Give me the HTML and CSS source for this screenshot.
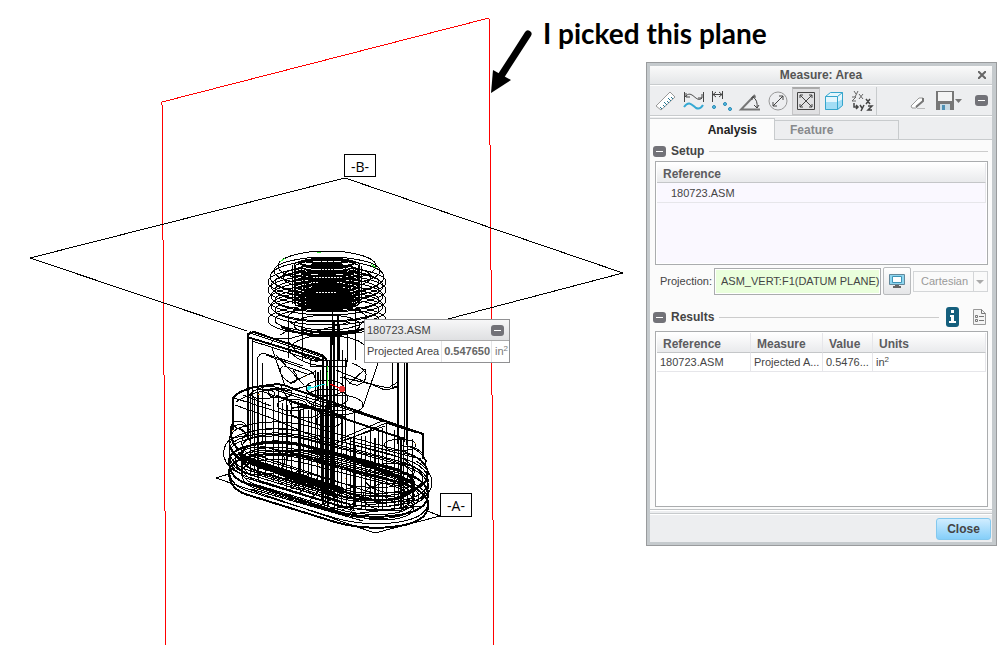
FILE: index.html
```html
<!DOCTYPE html>
<html lang="en">
<head>
<meta charset="utf-8">
<title>Measure: Area</title>
<link rel="stylesheet" href="styles.css">
</head>
<body>
<main class="viewport">
  <svg class="scene" width="1003" height="645" viewBox="0 0 1003 645" role="img" aria-label="Wireframe of assembly 180723 with datum planes">
    <defs>
      <g id="coil"><ellipse cx="327" cy="0" rx="59" ry="15"/><ellipse cx="327" cy="0" rx="52" ry="12"/></g>
      <ellipse id="core" cx="327" cy="0" rx="33" ry="8"/>
      <path id="ring" d="M229 466C229 452 262 444 300 450L395 475C425 482 431 495 427 505C420 523 370 526 335 516L245 488C232 483 229 475 229 466Z"/>
      <path id="inner" d="M242 467C243 456 270 451 300 457L390 480C412 486 418 496 412 504C402 516 366 516 337 508L254 483C244 479 241 473 242 467Z"/>
    </defs>
    <g class="wire">
      <path class="red" d="M166 645L162 102L489 18L494 645"/>
      <path d="M247 331L30 258L345 178L623 273L448 319"/>
      <path d="M232 473L216 478L375 533L440 516L425 510"/>

      <!-- plunger and spring -->
      <ellipse cx="327" cy="266" rx="49" ry="15"/>
      <ellipse cx="327" cy="271" rx="53" ry="14"/>
      <ellipse cx="327" cy="277" rx="57" ry="17"/>
      <ellipse cx="327" cy="277" rx="44" ry="12"/>
      <use href="#coil" y="282"/><use href="#coil" y="290"/><use href="#coil" y="300"/><use href="#coil" y="310"/><use href="#coil" y="320"/>
      <ellipse cx="327" cy="286" rx="56" ry="15"/><ellipse cx="327" cy="296" rx="56" ry="15"/><ellipse cx="327" cy="306" rx="56" ry="15"/>
      <use href="#core" y="266"/><use href="#core" y="268"/><use href="#core" y="272"/><use href="#core" y="276"/><use href="#core" y="280"/><use href="#core" y="284"/><use href="#core" y="288"/><use href="#core" y="292"/><use href="#core" y="296"/><use href="#core" y="299"/><use href="#core" y="302"/>
      <g class="bold">
        <ellipse cx="327" cy="261" rx="22" ry="2"/><ellipse cx="327" cy="263" rx="27" ry="4"/><ellipse cx="327" cy="276" rx="23" ry="4"/><ellipse cx="327" cy="281" rx="23" ry="6"/><ellipse cx="327" cy="289" rx="23" ry="6"/><ellipse cx="327" cy="293" rx="20" ry="4"/><ellipse cx="327" cy="297" rx="26" ry="6"/><ellipse cx="327" cy="301" rx="25" ry="4"/><ellipse cx="327" cy="303" rx="29" ry="5"/>
        <path d="M281 327Q326 346 374 325M301 329Q328 337 362 330"/>
      </g>
      <path d="M292 265V304M295 266V306M301 268V308M304 268V308M308 275V308M312 275V308M315 275V308M318 275V308M321 260V308M324 265V308M327 260V308M330 265V308M333 260V308M336 275V308M339 275V308M342 275V308M345 268V308M349 268V308M353 267V306M358 266V304M361 266V300"/>
      <ellipse cx="327" cy="318" rx="39" ry="12"/><ellipse cx="327" cy="325" rx="33" ry="10"/>
      <path d="M288 315V358M302 310V360M347 335V362M355 310V360M366 315V360M332 305V345M338 315V345"/>
      <path d="M280 335L289 330M271 343Q275 336 288 339L350 322M272 348L285 386M276 355L304 385M288 349Q300 334 328 336Q360 336 366 348"/>
      <path d="M288 349Q298 364 324 366M289 342Q300 361 328 360M310 360H346V366H310Z"/>

      <!-- yoke -->
      <path class="bold" d="M248 440V334L254 332L319 354Q326 356 327 362V490M323 357V440M331 335V494M334 322V486M339 325V360M247 337L320 359"/>
      <path d="M252 438V338M257 440V359Q260 352 266 354L303 366M262 441V363M266 355L305 369Q314 371 315 378V450M250 333L322 357M252 341L318 362M247 337L251 331M315 370V455M320 370V460M337 315V470M342 350V445M345 358V443"/>
      <path class="bold" d="M398 361V444M407 361V445M318 372V400M327 365V400M330 360V410"/>
      <path d="M404 361V442M392 361V388L397 386M365 369Q369 381 358 385Q350 386 344 376M352 363Q362 367 365 372M336 370L385 390L399 387M340 377L388 388L398 382M283 366Q275 372 290 383Q298 384 296 374L293 370M284 366L310 375M290 383L316 371M378 363L363 407M349 384L365 369M281 386L292 407L345 411M258 389Q269 383 288 391L311 385"/>
      <ellipse cx="325" cy="388" rx="19" ry="8"/><ellipse cx="327" cy="398" rx="21" ry="9"/><ellipse cx="338" cy="405" rx="25" ry="10"/>

      <!-- housing -->
      <path class="bold" d="M233 430V398Q238 391 255 387L278 384Q286 385 294 389L423 434V459M287 400L345 417M337 416L404 439"/>
      <path d="M234 398L322 426M236 402Q252 391 278 389L343 408L416 432M354 412V445M347 440L386 423L417 433M340 439L382 421M333 444L385 426M264 392L325 414M270 388L330 408M243 395L271 406M276 395L337 418M282 403V475M235 405L274 419L328 443M350 441L421 459"/>
      <ellipse cx="263" cy="394" rx="12" ry="5"/><ellipse cx="280" cy="393" rx="12" ry="5"/><ellipse cx="292" cy="405" rx="15" ry="6"/><ellipse cx="305" cy="412" rx="15" ry="6"/><ellipse cx="400" cy="445" rx="16" ry="6"/><ellipse cx="329" cy="421" rx="13" ry="6"/>
      <path d="M250 393V476M254 398V475M258 392V480M265 402V478M273 397V481M278 387V483M286 396V488M291 399V487M298 401V490M303 406V489M308 410V492M311 404V490M317 408V492M321 410V500M325 405V502M334 410V508M337 415V510M341 421V506M346 442V507M350 438V499M353 436V510M361 436V508M365 436V510M370 430V500M378 428V508M382 428V510M386 424V506M394 430V510M398 433V505M403 437V506M407 438V503M412 439V502"/>
      <path class="bold" d="M258 395V478M287 405V460M300 410V480M323 400V504M328 400V506M333 410V484M355 445V506M375 438V503M401 440V507"/>

      <!-- base -->
      <use href="#ring" y="-26"/><use href="#ring" y="-19"/><use href="#ring" y="-12"/><use href="#ring" y="-5" class="bold"/><use href="#ring" y="2"/><use href="#ring" y="6" class="bold"/><use href="#ring" y="-15"/>
      <use href="#inner" y="-26"/><use href="#inner" y="-20"/><use href="#inner" y="-13" class="bold"/><use href="#inner" y="-7"/><use href="#inner" y="-3"/><use href="#inner" y="1"/><use href="#inner" y="5"/>
      <path class="heavy" d="M240 457L301 476L344 490M258 466L330 487M342 455L414 483"/>
      <path class="bold" d="M230 447Q237 462 262 467L355 495Q390 508 412 489M238 453L301 480L369 499M247 460L335 493M251 463L338 497M232 424Q228 440 239 450M427 471Q430 482 417 488M285 452Q317 446 360 463L412 481"/>
      <path d="M232 425L246 433M230 429Q244 417 256 438M229 440Q238 416 250 441M224 457Q222 445 232 438L251 435M224 457Q227 469 242 474M233 422Q244 418 249 430M401 446Q426 445 426 467M416 461Q432 470 432 484Q431 496 414 501M404 453Q424 457 429 475M408 446Q422 451 427 462M246 478L355 511M248 483L357 517M251 489L363 521M256 474L346 503M273 468L360 500M335 492L355 487M327 509L416 500M343 515L421 506M300 469L280 485M309 473L289 491M317 478L298 494M327 482L309 501M344 491L323 505M362 498L341 511M265 466L385 504M259 456L391 499M280 450L408 489M300 449L415 477M260 446L336 463"/>
      <ellipse cx="260" cy="461" rx="25" ry="14"/><ellipse cx="391" cy="497" rx="28" ry="14"/><ellipse cx="382" cy="508" rx="32" ry="12"/><ellipse cx="394" cy="478" rx="29" ry="15"/>
      <path class="green" d="M327 372V386M327 366V371M280 262L285 258M371 264L376 268M317 252H321"/>
      <path class="cyan" d="M310 388L325 384"/>
      <path class="red" d="M330 384L342 389"/>
      <circle class="dot cyan-fill" cx="309" cy="388" r="2"/>
      <circle class="dot red-fill" cx="342" cy="389" r="3"/>
      <path class="orange" d="M258 394h2M232 430h1M249 442h1M318 464h1M345 478h1M415 443h1M305 376h1M258 488h1"/>

      <rect class="tag" x="344.5" y="154.5" width="31" height="22"/>
      <rect class="tag" x="440.5" y="493.5" width="31" height="23"/>
    </g>
    <text class="tag-text" x="360" y="172">-B-</text>
    <text class="tag-text" x="456" y="511">-A-</text>
    <path class="arrow-shaft" d="M528 34L501 76"/>
    <path d="M491 93L493 70L511 80Z"/>
  </svg>

  <p class="note">I picked this plane</p>

  <aside class="readout">
    <header class="readout-head"><span>180723.ASM</span><button class="collapse" aria-label="Collapse result"></button></header>
    <div class="readout-row"><span>Projected Area</span><strong>0.547650</strong><span class="unit">in<sup>2</sup></span></div>
  </aside>

  <section class="dialog" role="dialog" aria-labelledby="dialog-title">
    <header class="titlebar">
      <h1 id="dialog-title">Measure: Area</h1>
      <button class="dismiss" aria-label="Close window"><svg width="8" height="8" viewBox="0 0 8 8"><path d="M0 0L8 8M8 0L0 8"/></svg></button>
    </header>

    <div class="toolbar" role="toolbar" aria-label="Measure tools">
      <button class="tool" aria-label="Summary"><svg viewBox="0 0 24 24"><path class="thin" fill="#fff" d="M2 17L16 3L21 8L7 21Z"/><path stroke="#23738f" fill="none" d="M8 20L6 18M11 18L9 16M13 16L10 13M15 14L13 12M17 12L14 9M19 10L17 8"/></svg></button>
      <button class="tool" aria-label="Length"><svg viewBox="0 0 24 24"><path class="line" d="M2.500 3V13M21.500 3V13M3 8C10-1 14 15 20 9M4 4V8H8M20 5V9H16"/><path class="blue" d="M2 18C7 11 10 16 14 19Q18 21 21 16"/></svg></button>
      <button class="tool" aria-label="Distance"><svg viewBox="0 0 24 24"><path class="line" d="M2.500 2V13M12.500 2V10M3 5.500H12M6 3L3 5.500L6 8M9 3L12 5.500L9 8"/><g class="point"><circle cx="4" cy="18" r="1.500"/><circle cx="15" cy="15" r="1.500"/><circle cx="20" cy="20" r="1.500"/></g></svg></button>
      <button class="tool" aria-label="Angle"><svg viewBox="0 0 24 24"><path d="M17 6L3 20.500H22" fill="none" stroke="#777" stroke-width="2"/><path class="line" d="M15 8Q20 11 19 19M14 11V8H18M16 16L19 19L21 16"/></svg></button>
      <button class="tool" aria-label="Diameter"><svg viewBox="0 0 24 24"><circle class="thin" cx="12" cy="12" r="9"/><path class="line" d="M7 17L17 7M7 13V17H11M13 7H17V11"/></svg></button>
      <button class="tool selected" aria-label="Area" aria-pressed="true"><svg viewBox="0 0 24 24"><path class="line" d="M3.500 3.500H20.500V20.500H3.500ZM6 6L18 18M18 6L6 18M6 9V6H9M15 6H18V9M6 15V18H9M15 18H18V15"/></svg></button>
      <button class="tool" aria-label="Volume"><svg viewBox="0 0 24 24"><path fill="#e4f6fd" d="M3 7L8 3H21V16L16 21H3Z"/><path fill="#a2ddf5" d="M3 13H15L21 10V16L16 21H3Z"/><path fill="none" stroke="#35a5cc" d="M3.500 7.500H15.500V20.500H3.500ZM3.500 7.500L8.500 3.500H20.500L15.500 7.500M20.500 3.500V16.500L15.500 20.500"/></svg></button>
      <button class="tool" aria-label="Transform"><svg viewBox="0 0 24 24"><path class="thin dark" d="M4 2L6 5M8 2L5 8M2 8H6L2 12H6M9 5L13 10M13 5L9 10"/><path class="line" stroke-width="1.500" d="M4 14V18H8M6 16L8 18L6 20M10 16L12 19M14 16L11 22M16 10L20 15M20 10L16 15M18 17H22L18 21H22"/></svg></button>
      <span class="divider"></span>
      <button class="tool" aria-label="Clear"><svg viewBox="0 0 24 24"><path fill="#fff" stroke="#999" d="M3 17L11 9H15V12L8 19H4Z"/><path fill="none" stroke="#777" stroke-width="2" d="M8 18L15 12V9"/><path stroke="#bbb" d="M9 19.500H17"/></svg></button>
      <button class="tool save" aria-label="Save"><svg viewBox="0 0 28 24"><path fill="#777" d="M2 2H20V21H2Z"/><path fill="#f4f4f4" d="M4 3H18V12H4Z"/><path fill="#c8dae4" d="M6 15H16V21H6Z"/><path fill="#4f91b5" d="M8 16H11V21H8Z"/><path fill="#777" d="M21 10H28L24.500 14Z"/></svg></button>
      <button class="collapse" aria-label="Collapse dialog"></button>
    </div>

    <nav class="tabs" role="tablist">
      <button class="tab active" role="tab" aria-selected="true">Analysis</button>
      <button class="tab" role="tab" aria-selected="false">Feature</button>
    </nav>

    <div class="panel">
      <div class="section-head"><button class="collapse" aria-label="Collapse setup"></button><h2>Setup</h2><span class="rule"></span></div>
      <div class="list setup-list">
        <table>
          <thead><tr><th>Reference</th></tr></thead>
          <tbody><tr><td>180723.ASM</td></tr></tbody>
        </table>
      </div>
      <div class="projection">
        <label for="projection">Projection:</label>
        <input id="projection" value="ASM_VERT:F1(DATUM PLANE)">
        <button class="screen-button" aria-label="Screen plane"><svg width="16" height="16" viewBox="0 0 16 16"><path fill="#8ed6f0" stroke="#64889a" d="M.5 1.500H15.500V11.500H.5Z"/><path fill="#fff" stroke="#3e93b5" d="M3.500 3.500H12.500V9.500H3.500Z"/><path fill="#666" d="M6 12H10V13H12V15H4V13H6Z"/></svg></button>
        <span class="select"><select aria-label="Coordinate system" disabled><option>Cartesian</option></select></span>
      </div>
      <div class="section-head results-head"><button class="collapse" aria-label="Collapse results"></button><h2>Results</h2><span class="rule"></span>
        <button class="mini" aria-label="Information"><svg width="13" height="20" viewBox="0 0 13 20"><rect width="13" height="20" rx="3" fill="#155f7d"/><path fill="#fff" d="M5 3H8V6H5ZM4 8H8V14H10V16H3V14H5V10H4Z"/></svg></button>
        <button class="mini doc" aria-label="Report"><svg width="13" height="16" viewBox="0 0 13 16"><path fill="#f4f4f4" stroke="#999" d="M.5.5H8.500L12.500 4.500V15.500H.5Z"/><path fill="none" stroke="#777" d="M8.500.5V4.500H12.500M6 7.500H11M6 11.500H11M2.500 6.500H4.500V8.500H2.500ZM2.500 10.500H4.500V12.500H2.500Z"/></svg></button>
      </div>
      <div class="list results-list">
        <table>
          <colgroup><col class="col-ref"><col class="col-measure"><col class="col-value"><col></colgroup>
          <thead><tr><th>Reference</th><th>Measure</th><th>Value</th><th>Units</th></tr></thead>
          <tbody><tr><td>180723.ASM</td><td>Projected A...</td><td>0.5476...</td><td>in<sup>2</sup></td></tr></tbody>
        </table>
      </div>
    </div>
    <footer class="footer"><button class="close">Close</button></footer>
  </section>
</main>
</body>
</html>
```

FILE: styles.css
```css
* { box-sizing: border-box; }
body { margin: 0; background: #fff; color: #444; font: 11px/14px "Liberation Sans", Arial, sans-serif; }
button, input, select { margin: 0; padding: 0; border: 0; background: none; color: inherit; font: inherit; }
h1, h2, p { margin: 0; font-size: 12px; }
sup { font-size: 8px; line-height: 0; vertical-align: 4px; }

.viewport { position: relative; min-height: 100vh; overflow: hidden; }
.scene { position: absolute; top: 0; left: 0; }
.wire { fill: none; stroke: #000; stroke-width: 1; shape-rendering: crispEdges; }
.wire .bold { stroke-width: 2; }
.wire .heavy { stroke-width: 4; }
.wire .red { stroke: #f00; }
.wire .green { stroke: #3e3; }
.wire .cyan { stroke: #0dd; }
.wire .orange { stroke: #e92; }
.wire .tag { fill: #fff; }
.wire .dot { stroke: none; }
.cyan-fill { fill: #3ee; }
.red-fill { fill: #e33; }
.tag-text { font: 14px "Open Sans", sans-serif; text-anchor: middle; fill: #000; }
.arrow-shaft { stroke: #000; stroke-width: 7; stroke-linecap: round; }
.note { position: absolute; left: 543px; top: 17px; color: #000; font: bold 28px/32px Lato, Calibri, sans-serif; white-space: nowrap; }

.collapse { flex: none; display: grid; place-items: center; width: 13px; height: 11px; border-radius: 3px; background: #727278; }
.collapse::before { content: ""; width: 7px; height: 1px; background: #fff; }

.readout { position: absolute; left: 364px; top: 319px; border: 1px solid #909092; background: #fff; }
.readout-head { display: flex; align-items: center; justify-content: space-between; height: 21px; padding: 0 5px 0 2px; border-bottom: 1px solid #aaa; background: linear-gradient(#f7f7f8, #dfe0e2); }
.readout-row { display: flex; height: 21px; line-height: 21px; }
.readout-row > * { padding: 0 2px; }
.readout-row > * + * { border-left: 1px solid #e4e4e6; }
.readout-row strong { padding: 0 1px 0 2px; color: #666; }
.readout-row .unit { padding: 0 1px 0 3px; color: #777; }

.dialog { position: absolute; left: 646px; top: 62px; width: 351px; padding: 3px 4px 3px 3px; border: 1px solid #999b9d; background: #c5cacd; }
.titlebar { display: flex; align-items: center; height: 19px; padding: 0 6px 0 14px; border-bottom: 1px solid #c8cbcd; background: linear-gradient(#fafafa, #e4e6e8); color: #555; }
.titlebar h1 { flex: 1; text-align: center; }
.dismiss { display: grid; }
.dismiss path { stroke: #666; stroke-width: 2; }

.toolbar { display: flex; align-items: center; height: 31px; padding: 0 4px 0 2px; border-top: 1px solid #fff; border-bottom: 1px solid #c8cbcd; background: #edeef0; }
.tool { flex: none; display: grid; place-items: center; width: 28px; height: 28px; }
.tool svg { width: 24px; height: 24px; }
.tool.selected { border: 1px solid #c4c4c6; border-top: 2px solid #aaa; background: #e0e0e2; }
.tool.save { margin-right: 13px; }
.tool.save svg { width: 28px; }
.line { fill: none; stroke: #444; }
.thin { stroke: #999; }
circle.thin, .thin.dark { fill: none; }
.toolbar .thin.dark { stroke: #666; }
.blue { fill: none; stroke: #35a9d4; stroke-width: 2; }
.point { fill: #5bc2e8; stroke: #2587b3; }
.divider { width: 1px; height: 28px; margin-right: auto; background: #c8cbcd; }

.tabs { display: flex; align-items: flex-end; height: 24px; padding-top: 3px; border-top: 1px solid #fff; background: #edeef0; box-shadow: inset 0 -1px #c8cbcd; }
.tab { height: 20px; width: 124px; padding-left: 15px; border: 1px solid #c8cbcd; border-left: 0; color: #87898c; font-size: 12px; font-weight: bold; text-align: left; }
.tab.active { height: 22px; width: 125px; padding: 0 17px 0 0; border-bottom: 0; background: #fcfcfc; color: #222; text-align: right; }

.panel { padding: 1px 4px 2px 5px; border-bottom: 1px solid #c0c3c5; background: #fbfbfb; }
.section-head { display: flex; align-items: center; height: 20px; margin-left: -2px; gap: 5px; }
.section-head h2 { color: #444; }
.rule { flex: 1; height: 1px; background: #ccc; }
.results-head { height: 30px; margin-top: 6px; padding: 2px 2px 0 0; }
.mini { display: grid; margin-left: 2px; }
.doc { margin-left: 9px; }
.list { border: 1px solid #aaacae; padding: 1px; background: #fff; }
table { width: 100%; table-layout: fixed; border-collapse: separate; border-spacing: 0; }
th, td { overflow: hidden; white-space: nowrap; text-align: left; border-right: 1px solid #e6e6ea; }
th { height: 20px; padding: 2px 6px 0; border-bottom: 1px solid #c4c6c8; background: linear-gradient(#fff, #e9eaec); color: #5c5c60; font-size: 12px; }
td { height: 19px; padding: 0 3px; border-bottom: 1px solid #e6e6ea; }
.setup-list { height: 104px; background: #faf8ff; box-shadow: inset 0 0 0 1px #fff; }
.setup-list td { height: 20px; padding-left: 14px; }
.results-list { height: 176px; }
.col-ref { width: 94px; }
.col-measure { width: 72px; }
.col-value { width: 50px; }

.projection { display: flex; align-items: center; height: 28px; margin-top: 2px; gap: 2px; padding-left: 5px; }
.projection label { flex: 1; white-space: nowrap; }
.projection input { width: 167px; height: 27px; padding: 0 0 0 6px; border: 1px solid #aaacae; background: #eaffdc; box-shadow: inset 0 0 0 1px #fff; }
.screen-button { display: grid; place-items: center; width: 28px; height: 28px; border: 1px solid #b9bbbd; border-radius: 2px; background: linear-gradient(#fff, #e5e6e8); }
.select { position: relative; display: block; width: 75px; height: 21px; border: 1px solid #d4d6d8; background: #fafafa; }
.select select { width: 100%; height: 100%; padding-left: 7px; appearance: none; color: #999; opacity: 1; }
.select::before { content: ""; position: absolute; right: 13px; top: 0; bottom: 0; border-left: 1px solid #d4d6d8; }
.select::after { content: ""; position: absolute; right: 3px; top: 8px; border: 4px solid transparent; border-top-color: #aaa; border-bottom: 0; }

.footer { display: flex; justify-content: flex-end; padding: 7px 1px 2px; background: #edeef0; border-top: 1px solid #fff; box-shadow: inset 0 2px #edeef0, inset 0 3px #c8cbcd, inset 0 4px #fff; }
.close { width: 55px; height: 22px; border: 1px solid #83c8ee; border-radius: 3px; background: linear-gradient(#d0edff, #85cff9); color: #444; font-size: 12px; font-weight: bold; }
```
